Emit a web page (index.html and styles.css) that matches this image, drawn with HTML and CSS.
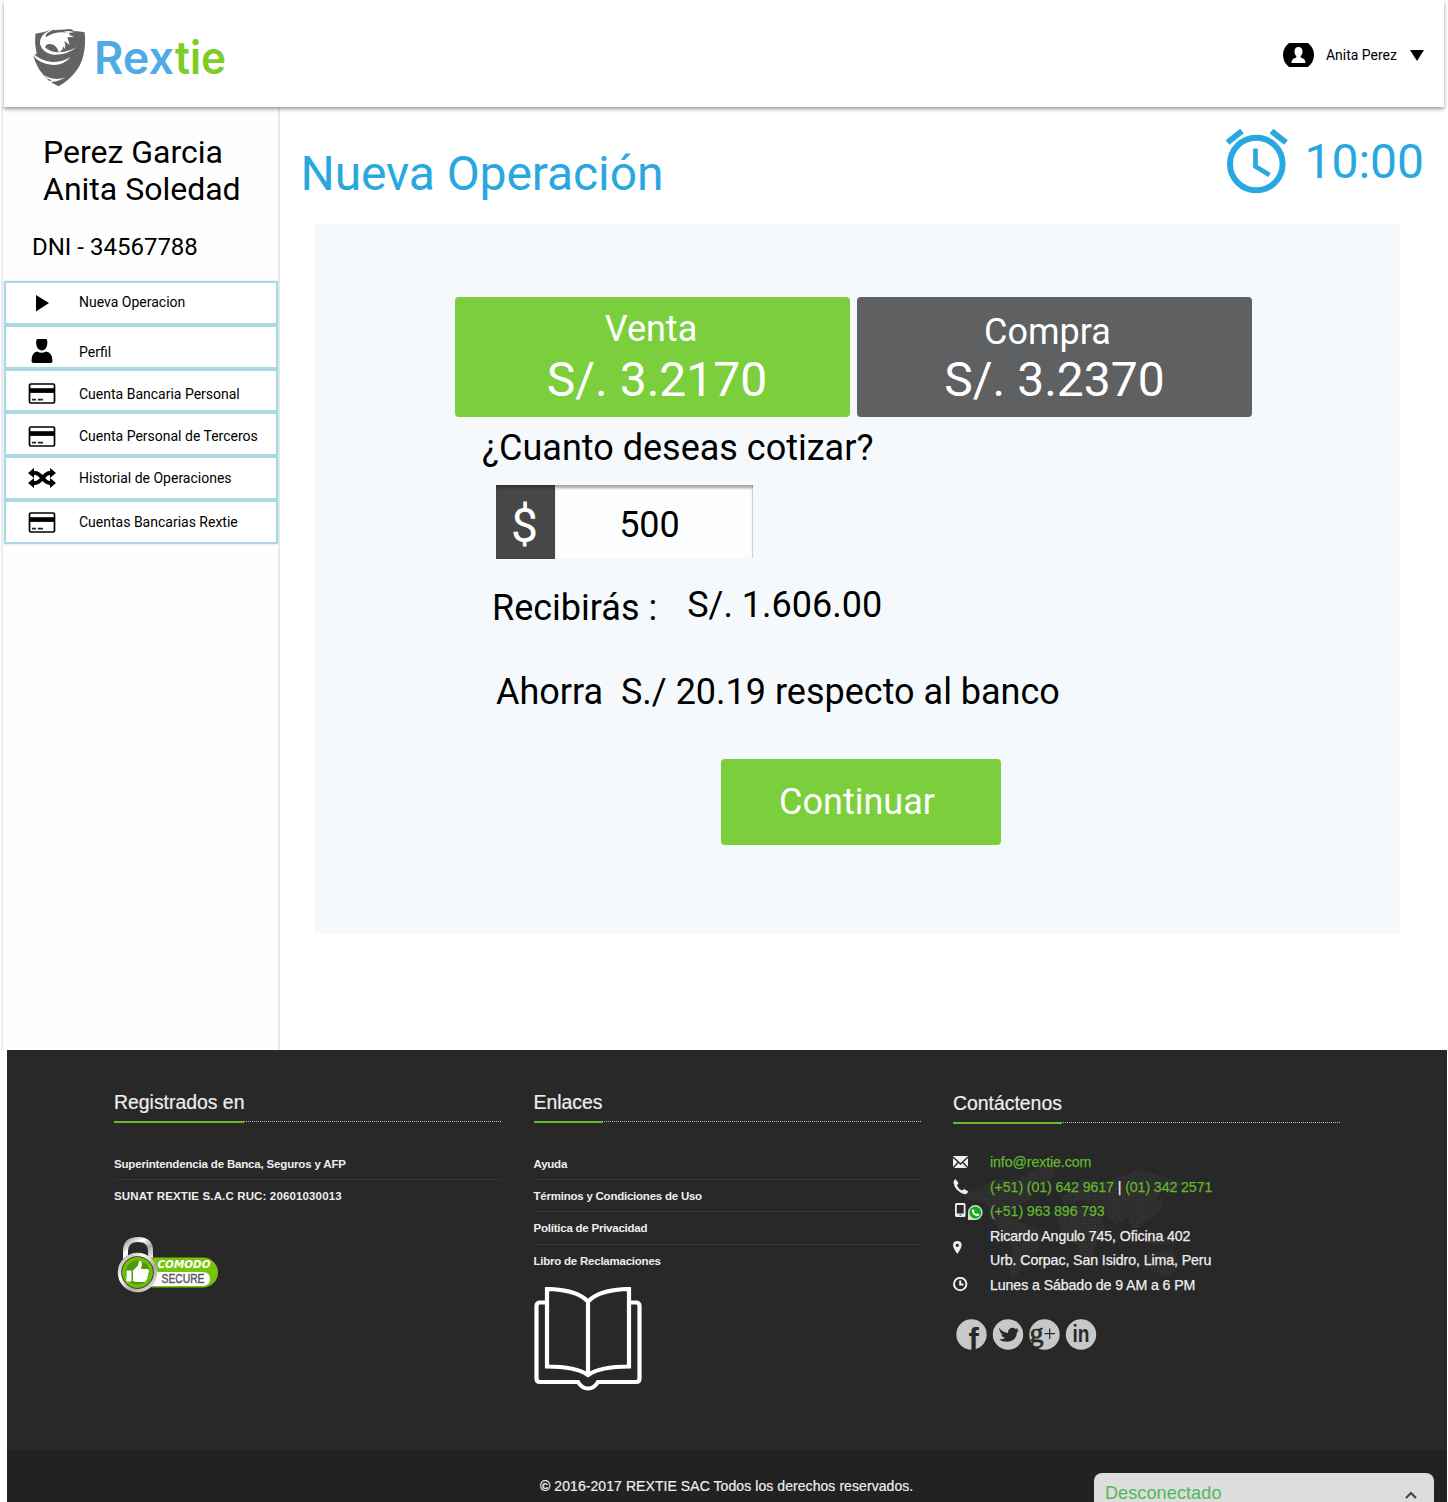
FILE: index.html
```html
<!DOCTYPE html>
<html lang="es">
<head>
<meta charset="utf-8">
<title>Rextie - Nueva Operación</title>
<link rel="stylesheet" href="styles.css">
</head>
<body>
<svg class="defs" width="0" height="0" aria-hidden="true">
  <symbol id="card" viewBox="0 0 27 21"><rect x="1" y="1" width="25" height="19" rx="1.3" fill="#fff" stroke="#000" stroke-width="1.7"/><path d="M1 5.2h25v4.7H1z"/><path d="M3.5 16.7h4M9.3 16.7h5.2" stroke="#222" stroke-width="1.8"/></symbol>
</svg>
<header class="topbar">
  <svg class="logo" viewBox="0 0 200 64" width="200" height="64" role="img" aria-label="Rextie">
    <g transform="translate(-30 -26) scale(.33333)">
      <path fill="#646263" d="M106 101Q132 98 150 90Q175 91 212 87L222 93Q240 94 254 97Q258 135 250 167Q236 223 176 259Q161 252 148 243Q111 212 99 164L110 162Q103 132 106 101Z"/>
      <path fill="#fff" d="M96 157Q121 184 156 186Q190 186 212 170Q194 194 160 195Q119 194 96 163Z"/>
      <path fill="#fff" d="M150 90Q117 106 120 132Q127 158 158 164Q202 166 230 141Q208 154 179 157Q151 158 135 142Q139 130 151 132Q171 134 176 157Q187 154 190 139L194 148L196 136L193 124Q202 129 209 136L202 112L223 111Q209 106 206 99L224 96L205 93L190 95L205 98Q165 92 137 112Q135 99 158 91Z"/>
      <path fill="#fff" d="M121 215Q139 236 172 237Q184 237 195 232Q180 244 158 245L145 247Q151 240 157 241Q139 236 134 228Z"/>
    </g>
    <g class="logo-word">
      <text x="64" y="48" textLength="80" lengthAdjust="spacingAndGlyphs" fill="#4eabe6">Rex</text>
      <text x="145" y="48" textLength="51" lengthAdjust="spacingAndGlyphs" fill="#7ccd28">tie</text>
    </g>
  </svg>
  <div class="user">
    <svg width="31" height="24" viewBox="0 0 31 24"><path d="M6 0h19q6 5 6 12t-6 12H6q-6-5-6-12T6 0z"/><path fill="#fff" d="M15.500 4c2.800 0 4 2 4 4.500 0 2-.8 3.500-1.800 4.500v1.500c2 .8 4.800 1.500 4.800 5.500h-14c0-4 2.800-4.700 4.800-5.500V13c-1-1-1.800-2.500-1.800-4.500C11.500 6 12.700 4 15.500 4z"/></svg>
    <span class="user-name">Anita Perez</span>
    <svg width="14" height="11" viewBox="0 0 14 11"><path d="M0 0h14L7 11z"/></svg>
  </div>
</header>
<div class="body">
  <aside class="sidebar">
    <p class="name">Perez Garcia<br>Anita Soledad</p>
    <p class="dni">DNI - 34567788</p>
    <ul class="menu">
      <li><svg class="ic" width="28" height="24" viewBox="0 0 28 24"><path d="M8 4l13 8-13 8.500z"/></svg><span class="up">Nueva Operacion</span></li>
      <li><svg class="ic low" width="28" height="24" viewBox="0 0 28 24"><path d="M9 0h9.500q1.500 2 .8 5-1 6-5.300 6.500Q9 11 8.200 5 7.500 2 9 0zM9 12.500q4.500 2.500 9 0 6.500 1 6.500 9.500 0 2-2 2h-17q-2 0-2-2Q3.500 13.500 9 12.500z"/></svg><span class="down">Perfil</span></li>
      <li class="drop"><svg class="ic" width="28" height="21"><use href="#card" width="28" height="21"/></svg><span>Cuenta Bancaria Personal</span></li>
      <li class="drop2"><svg class="ic" width="28" height="21"><use href="#card" width="28" height="21"/></svg><span>Cuenta Personal de Terceros</span></li>
      <li><svg class="ic" width="28" height="20" viewBox="0 0 28 20"><g fill="none" stroke="#000" stroke-width="3.800"><path d="M4 5h3c7 0 8 10 15 10h2M4 15h3c7 0 8-10 15-10h2"/></g><path d="M0 5l6-5v10zM0 15l6-5v10zM28 5l-6-5v10zM28 15l-6-5v10z"/></svg><span>Historial de Operaciones</span></li>
      <li><svg class="ic" width="28" height="21"><use href="#card" width="28" height="21"/></svg><span>Cuentas Bancarias Rextie</span></li>
    </ul>
  </aside>
  <main class="main">
    <div class="title-row">
      <h1>Nueva Operación</h1>
      <div class="timer">
        <svg width="64" height="67" viewBox="0 0 64 67" fill="none" stroke="#29a8e0"><circle cx="31.300" cy="36" r="26.300" stroke-width="6"/><path d="M2.500 14.500L17 3M46.500 3L61 14.500" stroke-width="6"/><path d="M30.500 20.500v18l14 8.500" stroke-width="4.700"/></svg>
        <span>10:00</span>
      </div>
    </div>
    <section class="panel">
      <div class="rates">
        <div class="rate sell"><span class="kind">Venta</span><span class="price">S/. 3.2170</span></div>
        <div class="rate buy"><span class="kind">Compra</span><span class="price">S/. 3.2370</span></div>
      </div>
      <p class="ask">¿Cuanto deseas cotizar?</p>
      <div class="amount"><span class="cur">$</span><span class="val">500</span></div>
      <div class="get"><span>Recibirás :</span><span class="sum">S/. 1.606.00</span></div>
      <p class="save">Ahorra&nbsp; S./ 20.19 respecto al banco</p>
      <button class="go">Continuar</button>
    </section>
  </main>
</div>
<footer class="footer">
  <div class="cols">
    <section class="col">
      <h2><span>Registrados en</span></h2>
      <ul class="links"><li class="long">Superintendencia de Banca, Seguros y AFP</li><li class="caps">SUNAT REXTIE S.A.C RUC: 20601030013</li></ul>
      <svg class="comodo" width="104" height="60" viewBox="0 0 104 60">
        <defs><linearGradient id="steel" x1="0" y1="0" x2="1" y2="1"><stop offset="0" stop-color="#999"/><stop offset=".35" stop-color="#fff"/><stop offset=".65" stop-color="#aaa"/><stop offset="1" stop-color="#eee"/></linearGradient></defs>
        <path d="M9.500 24V15Q9.500 3.500 22 3.500T34.500 15v9" fill="none" stroke="url(#steel)" stroke-width="5"/>
        <rect x="22" y="21.500" width="80" height="30" rx="15" fill="#77c40b"/>
        <path d="M35 36h51q8 0 8 7t-8 7H35z" fill="#fff"/>
        <circle cx="21.500" cy="36.500" r="18" fill="#222" stroke="url(#steel)" stroke-width="3.500"/><circle cx="21.500" cy="36.500" r="15.500" fill="#70bd08"/><circle cx="21.500" cy="36.500" r="12" fill="#4a9a08"/>
        <path fill="#fff" d="M10.500 34.500h5v11h-5zM17 34.500l5-5 1-4.500q3-.5 3 3l-1 5h6q2 0 2 2t-1 2.500q1 2-.7 3.500.5 2-1 3-.3 2-2.300 2h-8.500l-2.500-1z"/>
        <text x="41.500" y="32" class="c1" textLength="53" lengthAdjust="spacingAndGlyphs">COMODO</text>
        <text x="45.500" y="47.300" class="c2" textLength="43" lengthAdjust="spacingAndGlyphs">SECURE</text>
      </svg>
    </section>
    <section class="col">
      <h2><span>Enlaces</span></h2>
      <ul class="links tight"><li>Ayuda</li><li>Términos y Condiciones de Uso</li><li>Política de Privacidad</li><li>Libro de Reclamaciones</li></ul>
      <svg class="book" width="108" height="105" viewBox="0 0 108 105" fill="none" stroke="#fff" stroke-width="4.200"><path d="M12.500 15.500H6Q2.500 15.500 2.500 19V91.500Q2.500 95 6 95H44Q48 101.500 54 101.500T64 95H102Q105.500 95 105.500 91.500V19Q105.500 15.500 102 15.500H96"/><path d="M54 14.500Q42 2.500 13 2V79.500Q42 79.500 54 88Q66 79.500 95 79.500V2Q66 2.500 54 14.500zV87"/></svg>
    </section>
    <section class="col contact">
      <svg class="map" width="240" height="122" viewBox="0 0 240 122"><defs><pattern id="dots" width="3" height="3" patternUnits="userSpaceOnUse"><rect width="2.500" height="2.500" fill="#323232"/></pattern></defs><path fill="url(#dots)" d="M5 27L28 25 40 14 62 16 75 9 88 1 103 4 96 17 76 23 78 34 66 40 55 47 46 49 64 55 89 67 85 84 70 98 61 116 57 109 59 82 49 67 38 52 34 38 14 34zM105 55L111 43 129 41 148 53 153 66 143 78 139 91 129 91 122 76 109 70zM108 34L119 20 129 14 150 17 176 9 187 3 207 11 232 18 221 26 207 27 205 34 211 40 201 51 190 57 181 67 174 52 163 60 149 44 129 36 112 40zM184 68l29 4 4 8-25-2zM195 88l24-3 8 16-12 11-24-8z"/></svg>
      <h2><span>Contáctenos</span></h2>
      <dl class="info">
        <dt><svg width="16" height="14" viewBox="0 0 16 14"><path fill="#eee" d="M0 1h15v12H0z"/><path d="M0 2l7.500 7L15 2M0 13l5.500-6M15 13L9.500 7" stroke="#282828" stroke-width="1.400" fill="none"/></svg></dt><dd class="g">info@rextie.com</dd>
        <dt><svg width="16" height="16" viewBox="0 0 16 16"><path fill="#eee" d="M2.500 0l3 4-1.500 2.500q1.500 3.500 5 5l2-1.500 4 2.200q-.5 3-3 3Q2.500 13 .5 4q0-3 2-4z"/></svg></dt><dd class="g">(+51) (01) 642 9617 <b>|</b> (01) 342 2571</dd>
        <dt class="mob"><svg width="31" height="18" viewBox="0 0 31 18"><path fill="#eee" fill-rule="evenodd" d="M3.500 0H11q1.500 0 1.500 1.500v11Q12.500 14 11 14H3.500Q2 14 2 12.500v-11Q2 0 3.500 0zm.3 2v8.500h6.900V2zm2.700 9.500v1h2v-1z"/><path fill="#d8d8d8" d="M15 17V9.500A7.300 7.500 0 1 1 22.300 17z"/><circle cx="22.300" cy="9.500" r="5.900" fill="#12ab1b"/><path fill="#fff" d="M19.800 6l2 2-1 1q1 1.500 2.500 2.200l1-1 2 1.300q0 1.800-2 1.700-4.800-1-5.500-5.500z"/></svg></dt><dd class="g">(+51) 963 896 793</dd>
        <dt><svg width="16" height="14" viewBox="0 0 16 14"><path fill="#eee" fill-rule="evenodd" d="M4.300 0q4.300 0 4.300 4.300 0 2.700-4.300 8.700Q0 7 0 4.300 0 0 4.300 0zm0 2.800a1.600 1.600 0 1 0 .01 0z"/></svg></dt><dd>Ricardo Angulo 745, Oficina 402<br>Urb. Corpac, San Isidro, Lima, Peru</dd>
        <dt><svg width="16" height="16" viewBox="0 0 16 16" fill="none" stroke="#eee" stroke-width="2"><circle cx="7.200" cy="7" r="6.200"/><path d="M7.200 3.500v4H10.500"/></svg></dt><dd>Lunes a Sábado de 9 AM a 6 PM</dd>
      </dl>
      <svg class="social" width="141" height="42" viewBox="0 0 141 42">
        <g fill="#c8c8c8"><circle cx="15.500" cy="15.500" r="15.200"/><circle cx="52" cy="15.500" r="15.200"/><circle cx="88.500" cy="15.500" r="15.200"/><circle cx="125" cy="15.500" r="15.200"/></g>
        <g fill="#282828"><text x="12.500" y="30.500" class="sf">f</text><text x="73.500" y="23" class="sg">g</text><path d="M88.500 14.700h10.500M93.700 9.500V20" stroke="#282828" stroke-width="1.200"/>
        <path d="M43 9q4 4.500 9 5 0-5 4.300-5.200 2 0 3.200 1.300l2.500-.8-1 2 2 .2-2 2q-.5 8-9 9.200-6 .3-8.700-2.500 4 .3 5.700-1.500-3-.7-4-3h2q-3-1.700-3.300-4.200l2 .5Q42.500 11.500 43 9z"/>
        <text x="116.500" y="22.500" class="si" textLength="17" lengthAdjust="spacingAndGlyphs">in</text></g></svg>
    </section>
  </div>
  <div class="legal"><p><b>©</b> 2016-2017 REXTIE SAC Todos los derechos reservados.</p></div>
  <div class="chat"><span>Desconectado</span><svg width="12" height="8" viewBox="0 0 12 8"><path d="M1 7l5-5 5 5" fill="none" stroke="#444" stroke-width="2.200"/></svg></div>
</footer>
</body>
</html>
```
FILE: styles.css
```css
* { box-sizing: border-box; margin: 0; padding: 0; }
body { width: 1448px; height: 1502px; overflow: hidden; background: #fff; color: #000; font-family: Roboto, sans-serif; position: relative; }
ul { list-style: none; }
svg { display: block; flex: none; }
.defs { position: absolute; }

.topbar { height: 107px; margin: 0 4px; padding: 0 20px 0 26px; display: flex; justify-content: space-between; position: relative; background: #fff; box-shadow: 0 2px 4px rgba(0,0,0,.42); }
.logo { margin-top: 26px; }
.logo-word { font: 600 45px Inter, sans-serif; }
.user { display: flex; align-items: center; height: 24px; margin-top: 43px; }
.user-name { font-size: 14px; line-height: 24px; margin: 0 13px 0 12px; white-space: nowrap; }

.body { display: flex; height: 943px; }
.sidebar { width: 279px; margin-left: 1px; padding-top: 27px; border-left: 2px solid #ececec; border-right: 2px solid #e9e9e9; background: #fefefe; }
.name { font-size: 32px; line-height: 37px; padding-left: 40px; white-space: nowrap; }
.dni { font-size: 24px; line-height: 28px; margin-top: 25px; padding-left: 29px; }
.menu { margin: 20px 0 0 1px; width: 274px; height: 263px; display: grid; grid-template-rows: repeat(6, 1fr); position: relative; }
.menu li { display: flex; align-items: center; padding-left: 21.5px; border: 2px solid #a9d7e3; background: #fff; box-shadow: 0 0 2px #b7dfe9; font-size: 14px; white-space: nowrap; }
.menu span { margin-left: 23.5px; line-height: 16px; }
.menu .up { padding-bottom: 1px; }
.menu .down { padding-top: 10px; }
.menu .low { margin-top: 8px; }
.menu .drop { padding-top: 6px; }
.menu .drop2 { padding-top: 4px; }

.main { width: 1168px; }
.title-row { display: flex; justify-content: space-between; height: 117px; padding: 19px 24px 0 20.5px; color: #29a8e0; }
h1, .timer { font-size: 48px; font-weight: 400; line-height: 56px; white-space: nowrap; }
h1 { padding-top: 20px; letter-spacing: -.1px; }
.timer { display: flex; }
.timer svg { margin: 2px -1px 0 1px; }
.timer span { margin: 8px 0 0 16px; }
.panel { margin-left: 35px; width: 1085px; height: 710px; padding: 73px 0 0 140px; background: #f5f9fc; font-size: 36px; line-height: 42px; white-space: nowrap; }
.rates { display: flex; gap: 7px; }
.rate { width: 395px; height: 120px; border-radius: 4px; color: #fff; text-align: center; display: flex; flex-direction: column; }
.sell { background: #7bcf3c; padding: 11px 0 0; }
.buy { background: #5f6062; padding: 14px 0 0; }
.kind { height: 42px; padding-right: 3px; }
.price { font-size: 48px; line-height: 56px; margin-top: 2px; padding-left: 9px; }
.buy .price { margin-top: -1px; padding-left: 0; }
.buy .kind { padding-right: 14px; }
.ask { margin: 10px 0 0 27px; }
.amount { display: flex; width: 257px; height: 74px; margin: 16px 0 0 41px; }
.cur { width: 59px; background: #474747; color: #fff; font-size: 48px; line-height: 81px; padding-right: 2px; text-align: center; box-shadow: inset 0 4px 3px -1px #333; }
.val { width: 198px; height: 73px; background: #fcfdfe; line-height: 80px; text-align: center; padding-right: 9px; box-shadow: inset 0 4px 3px -1px rgba(0,0,0,.35), inset -2px 0 1px -1px rgba(0,0,0,.15); }
.get { display: flex; margin: 28px 0 0 37px; }
.get .sum { margin: -3px 0 0 30px; }
.save { margin: 42px 0 0 41px; }
.go { display: block; width: 280px; height: 86px; margin: 46px 0 0 266px; border: 0; border-radius: 4px; background: #7bcf3c; color: #fff; font: 36px/42px Roboto, sans-serif; padding-right: 8px; }

.footer { position: relative; height: 452px; width: 1440px; margin-left: 7px; background: #282828; color: #eee; font-family: "Liberation Sans", Arial, sans-serif; overflow: hidden; white-space: nowrap; }
.cols { display: grid; grid-template-columns: repeat(3, 388px); gap: 31.5px; height: 400px; padding: 40px 0 0 107px; }
.col { position: relative; }
.contact { padding-top: 1px; }
h2 { height: 32px; font-size: 19.4px; font-weight: 400; line-height: 24px; display: flex; -webkit-text-stroke: .2px; background: repeating-linear-gradient(90deg, #bbb 0 1px, transparent 1px 2px) 0 31px / 100% 1px no-repeat; }
h2 span { height: 33px; border-bottom: 2px solid #69b82e; }
.links { margin-top: 26px; font-size: 11.5px; font-weight: 700; }
.links li { height: 32.2px; line-height: 32px; border-bottom: 1px solid #353535; }
.links li:last-child { border: 0; }
.links .long { letter-spacing: -.17px; }
.links .caps { letter-spacing: .14px; }
.tight { letter-spacing: -.23px; }
.comodo { margin: 24px 0 0 2px; }
.c1 { font: italic 700 10.500px "DejaVu Sans", sans-serif; fill: #fff; }
.c2 { font: 400 13.500px "Liberation Sans", sans-serif; fill: #555; stroke: #555; stroke-width: .4px; }
.book { margin-top: 10px; }
.map { position: absolute; left: 0; top: 75px; }
.info { position: relative; display: grid; grid-template-columns: 37px 1fr; margin-top: 27px; font-size: 14.2px; letter-spacing: -.1px; line-height: 24.600px; -webkit-text-stroke: .25px; align-items: center; }
.info .g { color: #62b52f; }
.info b { color: #eee; font-weight: 400; }
.info .mob svg { margin-top: 2px; }
.social { margin: 21px 0 0 3px; }
.sf { font: 700 31px "Liberation Sans", sans-serif; }
.sg { font: 400 28px "Liberation Serif", serif; stroke: #282828; stroke-width: .7px; }
.si { font: 700 23.5px "Liberation Sans", sans-serif; }
.legal { height: 52px; background: #222; padding: 26px 0 0 533px; font-size: 14px; line-height: 20px; letter-spacing: .07px; -webkit-text-stroke: .2px; }
.chat { position: absolute; left: 1087px; top: 423px; width: 340px; height: 40px; border-radius: 8px 8px 0 0; background: #ddd; display: flex; justify-content: space-between; padding: 10px 17px 0 11px; color: #4fb854; font-size: 18px; letter-spacing: .12px; line-height: 20px; }
.chat svg { margin-top: 8px; }
```
